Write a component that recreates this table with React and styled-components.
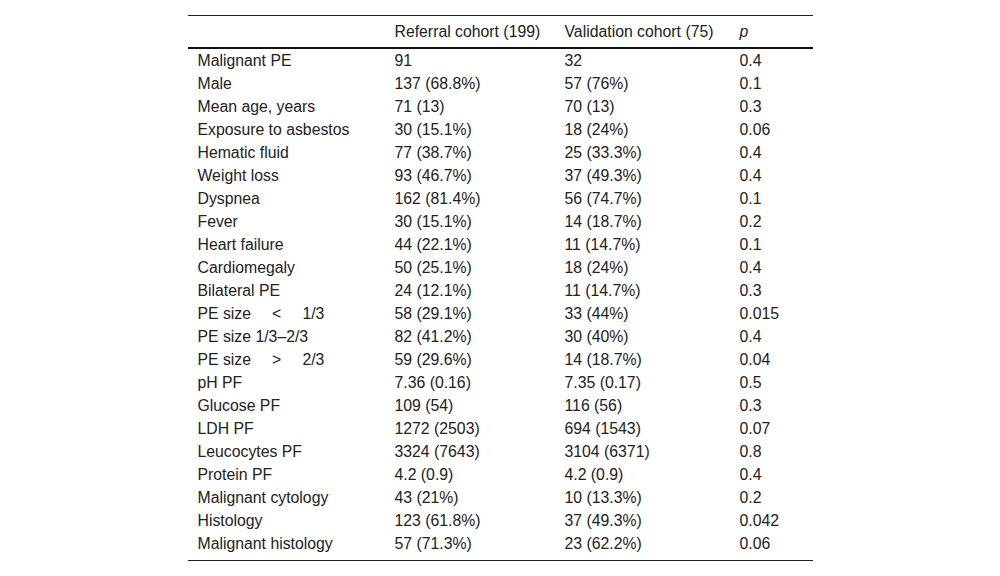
import React from 'react';
import styled, { createGlobalStyle } from 'styled-components';

const gap = '\u2003\u2004';

const rows = [
  ['Malignant PE', '91', '32', '0.4'],
  ['Male', '137 (68.8%)', '57 (76%)', '0.1'],
  ['Mean age, years', '71 (13)', '70 (13)', '0.3'],
  ['Exposure to asbestos', '30 (15.1%)', '18 (24%)', '0.06'],
  ['Hematic fluid', '77 (38.7%)', '25 (33.3%)', '0.4'],
  ['Weight loss', '93 (46.7%)', '37 (49.3%)', '0.4'],
  ['Dyspnea', '162 (81.4%)', '56 (74.7%)', '0.1'],
  ['Fever', '30 (15.1%)', '14 (18.7%)', '0.2'],
  ['Heart failure', '44 (22.1%)', '11 (14.7%)', '0.1'],
  ['Cardiomegaly', '50 (25.1%)', '18 (24%)', '0.4'],
  ['Bilateral PE', '24 (12.1%)', '11 (14.7%)', '0.3'],
  [`PE size${gap}<${gap}1/3`, '58 (29.1%)', '33 (44%)', '0.015'],
  ['PE size 1/3\u20132/3', '82 (41.2%)', '30 (40%)', '0.4'],
  [`PE size${gap}>${gap}2/3`, '59 (29.6%)', '14 (18.7%)', '0.04'],
  ['pH PF', '7.36 (0.16)', '7.35 (0.17)', '0.5'],
  ['Glucose PF', '109 (54)', '116 (56)', '0.3'],
  ['LDH PF', '1272 (2503)', '694 (1543)', '0.07'],
  ['Leucocytes PF', '3324 (7643)', '3104 (6371)', '0.8'],
  ['Protein PF', '4.2 (0.9)', '4.2 (0.9)', '0.4'],
  ['Malignant cytology', '43 (21%)', '10 (13.3%)', '0.2'],
  ['Histology', '123 (61.8%)', '37 (49.3%)', '0.042'],
  ['Malignant histology', '57 (71.3%)', '23 (62.2%)', '0.06'],
];

const Global = createGlobalStyle`
  body {
    margin: 0;
    background: #fff;
    font-family: "Liberation Sans", Arial, sans-serif;
    color: #222;
  }
`;

const Page = styled.div`
  display: flex;
  justify-content: center;
  padding-top: 15px;
`;

const Table = styled.table`
  width: 625px;
  border-collapse: collapse;
  border-top: 1px solid #222;
  border-bottom: 1px solid #222;
  font-size: 15.8px;
  table-layout: fixed;
`;

const Col = styled.col`
  width: ${p => p.w}px;
`;

const Th = styled.th`
  text-align: left;
  font-weight: normal;
  height: 31px;
  padding: 0 10px;
  vertical-align: middle;
  border-bottom: 2px solid #111;
  font-style: ${p => (p.italic ? 'italic' : 'normal')};
  white-space: nowrap;
`;

const Td = styled.td`
  height: 23px;
  padding: 0 10px;
  vertical-align: middle;
  white-space: nowrap;
`;

const Spacer = styled.td`
  height: 5px;
  padding: 0;
`;

export default function App() {
  return (
    <Page>
      <Global />
      <Table>
        <colgroup>
          <Col w={197} />
          <Col w={170} />
          <Col w={175} />
          <Col w={83} />
        </colgroup>
        <thead>
          <tr>
            <Th />
            <Th>Referral cohort (199)</Th>
            <Th>Validation cohort (75)</Th>
            <Th italic>p</Th>
          </tr>
        </thead>
        <tbody>
          {rows.map(r => (
            <tr key={r[0]}>
              {r.map((c, i) => (
                <Td key={i}>{c}</Td>
              ))}
            </tr>
          ))}
          <tr>
            <Spacer colSpan={4} />
          </tr>
        </tbody>
      </Table>
    </Page>
  );
}
